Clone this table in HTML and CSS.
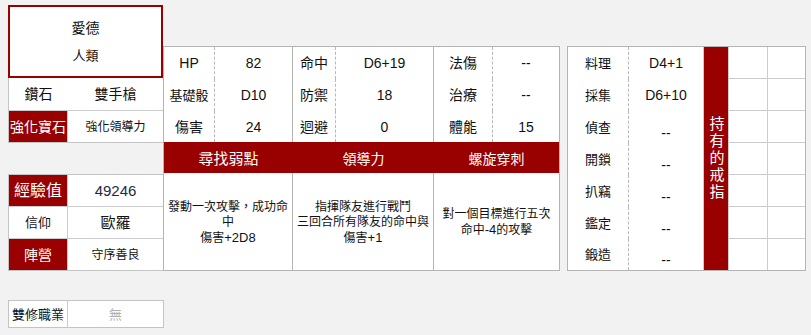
FILE: index.html
```html
<!DOCTYPE html>
<html lang="zh-Hant">
<head>
<meta charset="utf-8">
<title>角色卡</title>
<link rel="stylesheet" href="styles.css">
</head>
<body>
<div class="sheet">
  <!-- identity column -->
  <div class="col-left">
    <div class="name-box">
      <div class="name">愛德</div>
      <div class="race">人類</div>
    </div>

    <div class="info top">
      <div class="cell lbl plain">鑽石</div><div class="cell val big">雙手槍</div>
      <div class="cell lbl red last">強化寶石</div><div class="cell val small last">強化領導力</div>
    </div>

    <div class="info exp">
      <div class="cell lbl red lg">經驗值</div><div class="cell val num">49246</div>
      <div class="cell lbl sm">信仰</div><div class="cell val lg">歐羅</div>
      <div class="cell lbl red last">陣營</div><div class="cell val small last">守序善良</div>
    </div>

    <div class="info dual">
      <div class="cell lbl sm last">雙修職業</div><div class="cell val none last">無</div>
    </div>
  </div>

  <!-- stats and skills -->
  <div class="col-mid">
    <div class="stats">
      <div class="st k">HP</div><div class="st v g">82</div>
      <div class="st k">命中</div><div class="st v g">D6+19</div>
      <div class="st k">法傷</div><div class="st v">--</div>

      <div class="st k sm">基礎骰</div><div class="st v g">D10</div>
      <div class="st k">防禦</div><div class="st v g">18</div>
      <div class="st k">治療</div><div class="st v">--</div>

      <div class="st k">傷害</div><div class="st v g">24</div>
      <div class="st k">迴避</div><div class="st v g">0</div>
      <div class="st k">體能</div><div class="st v">15</div>
    </div>

    <div class="skills">
      <div class="sk-head wide">尋找弱點</div>
      <div class="sk-head">領導力</div>
      <div class="sk-head">螺旋穿刺</div>

      <div class="sk-desc g"><p>發動一次攻擊，成功命<br>中<br>傷害<span class="lat">+2D8</span></p></div>
      <div class="sk-desc g"><p>指揮隊友進行戰鬥<br>三回合所有隊友的命中與<br>傷害<span class="lat">+1</span></p></div>
      <div class="sk-desc"><p>對一個目標進行五次<br>命中<span class="lat">-4</span>的攻擊</p></div>
    </div>
  </div>

  <!-- life skills and rings -->
  <div class="col-right">
    <div class="skill-grid">
      <div class="rk r1">料理</div><div class="rv r1">D4+1</div>
      <div class="ring"><span>持有的戒指</span></div>
      <div class="slot s1 r1"></div><div class="slot s2 r1"></div>

      <div class="rk r2">採集</div><div class="rv r2">D6+10</div>
      <div class="slot s1 r2"></div><div class="slot s2 r2"></div>

      <div class="rk r3">偵查</div><div class="rv r3 low">--</div>
      <div class="slot s1 r3"></div><div class="slot s2 r3"></div>

      <div class="rk r4">開鎖</div><div class="rv r4 low">--</div>
      <div class="slot s1 r4"></div><div class="slot s2 r4"></div>

      <div class="rk r5">扒竊</div><div class="rv r5 low">--</div>
      <div class="slot s1 r5"></div><div class="slot s2 r5"></div>

      <div class="rk r6">鑑定</div><div class="rv r6 low">--</div>
      <div class="slot s1 r6"></div><div class="slot s2 r6"></div>

      <div class="rk r7">鍛造</div><div class="rv r7 low">--</div>
      <div class="slot s1 r7 last"></div><div class="slot s2 r7 last"></div>
    </div>
  </div>
</div>
</body>
</html>
```

FILE: styles.css
```css
* {
  box-sizing: border-box;
}

html,
body {
  margin: 0;
  background: #f2f2f2;
}

body {
  padding: 5px 8px;
  font-family: "Liberation Sans", "Noto Sans CJK TC", sans-serif;
  font-size: 14px;
  color: #111;
}

.sheet {
  display: flex;
  align-items: flex-start;
}

/* ---------- left column ---------- */

.col-left {
  display: flex;
  flex-direction: column;
  width: 156px;
}

.name-box {
  width: 155px;
  height: 73px;
  border: 2px solid #990000;
  background: #fff;
  display: flex;
  flex-direction: column;
  align-items: center;
  justify-content: center;
  gap: 10px;
  line-height: 18px;
}

.name {
  font-size: 14px;
}

.race {
  font-size: 13px;
}

.info {
  display: grid;
  grid-template-columns: 59px 95px;
  width: 156px;
  border: 1px solid #c4c4c4;
  border-top: 0;
  background: #fff;
}

.info .cell {
  height: 32px;
  display: flex;
  align-items: center;
  justify-content: center;
  border-bottom: 1px solid #cccccc;
  white-space: nowrap;
  line-height: 1;
}

.info .cell.last {
  height: 31px;
  border-bottom: 0;
}

.info.top .cell {
  height: 33px;
}

.info.top .cell.last {
  height: 31px;
}

.info .lbl {
  border-right: 1px solid #cccccc;
  font-size: 14px;
}

.info .lbl.plain {
  border-right: 0;
}

.info .lbl.sm {
  font-size: 13px;
}

.info .lbl.lg {
  font-size: 16px;
}

.info .red {
  background: #990000;
  color: #fff;
}

.info .val.big {
  font-size: 14px;
}

.info .val.small {
  font-size: 12px;
}

.info .val.lg {
  font-size: 15px;
}

.info .val.num {
  font-size: 15px;
  color: #1c2a44;
}

.info .val.none {
  color: #b0b0b0;
  font-size: 13px;
}

.exp {
  margin-top: 31px;
  border-top: 1px solid #c4c4c4;
}

.dual {
  margin-top: 29px;
  border-top: 1px solid #c4c4c4;
}

.dual .cell.last {
  height: 26px;
}

/* ---------- middle column ---------- */

.col-mid {
  width: 397px;
  margin-left: -1px;
  margin-top: 41px;
  border: 1px solid #b4b4b4;
  background: #fff;
}

.stats {
  display: grid;
  grid-template-columns: 51px 78px 43px 98px 59px 66px;
  grid-template-rows: 32px 32px 31px;
}

.st {
  display: flex;
  align-items: center;
  justify-content: center;
  white-space: nowrap;
  line-height: 1;
  font-size: 14px;
}

.st.k {
  border-right: 1px dashed #b8b8b8;
}

.st.k.sm {
  font-size: 13px;
}

.st.v {
  font-size: 14px;
}

.st.v.g {
  border-right: 1px solid #b4b4b4;
}

.skills {
  display: grid;
  grid-template-columns: 129px 141px 125px;
  grid-template-rows: 31px 97px;
}

.sk-head {
  background: #990000;
  color: #fff;
  font-size: 14px;
  display: flex;
  align-items: center;
  justify-content: center;
  padding-top: 2px;
  line-height: 1;
}

.sk-head.wide {
  font-size: 15px;
}

.sk-desc {
  display: flex;
  align-items: center;
  justify-content: center;
  text-align: center;
  font-size: 12px;
  line-height: 15px;
  white-space: nowrap;
  padding-top: 2px;
}

.sk-desc p {
  margin: 0;
}

.sk-desc.g {
  border-right: 1px solid #b4b4b4;
}

.lat {
  font-family: "Liberation Sans", sans-serif;
  font-size: 13px;
}

/* ---------- right column ---------- */

.col-right {
  margin-left: 7px;
  margin-top: 41px;
  width: 239px;
  border: 1px solid #b4b4b4;
  background: #fff;
}

.skill-grid {
  display: grid;
  grid-template-columns: 61px 75px 25px 39px 37px;
  grid-template-rows: repeat(6, 32px) 31px;
}

.rk,
.rv {
  display: flex;
  align-items: center;
  justify-content: center;
  line-height: 1;
  white-space: nowrap;
  font-size: 14px;
}

.rk {
  grid-column: 1;
  font-size: 13px;
  border-right: 1px dashed #b8b8b8;
}

.rv {
  grid-column: 2;
  border-right: 1px solid #cccccc;
}

.rv.low {
  padding-top: 11px;
}

.ring {
  grid-column: 3;
  grid-row: 1 / -1;
  background: #990000;
  color: #fff;
  border-right: 1px solid #cccccc;
  display: flex;
  align-items: center;
  justify-content: center;
}

.ring span {
  writing-mode: vertical-rl;
  text-orientation: upright;
  font-size: 15px;
  letter-spacing: 2px;
  line-height: 1;
}

.slot {
  border-bottom: 1px solid #cccccc;
}

.slot.s1 {
  grid-column: 4;
  border-right: 1px solid #cccccc;
}

.slot.s2 {
  grid-column: 5;
}

.slot.last {
  border-bottom: 0;
}

.r1 { grid-row: 1; }
.r2 { grid-row: 2; }
.r3 { grid-row: 3; }
.r4 { grid-row: 4; }
.r5 { grid-row: 5; }
.r6 { grid-row: 6; }
.r7 { grid-row: 7; }
```
